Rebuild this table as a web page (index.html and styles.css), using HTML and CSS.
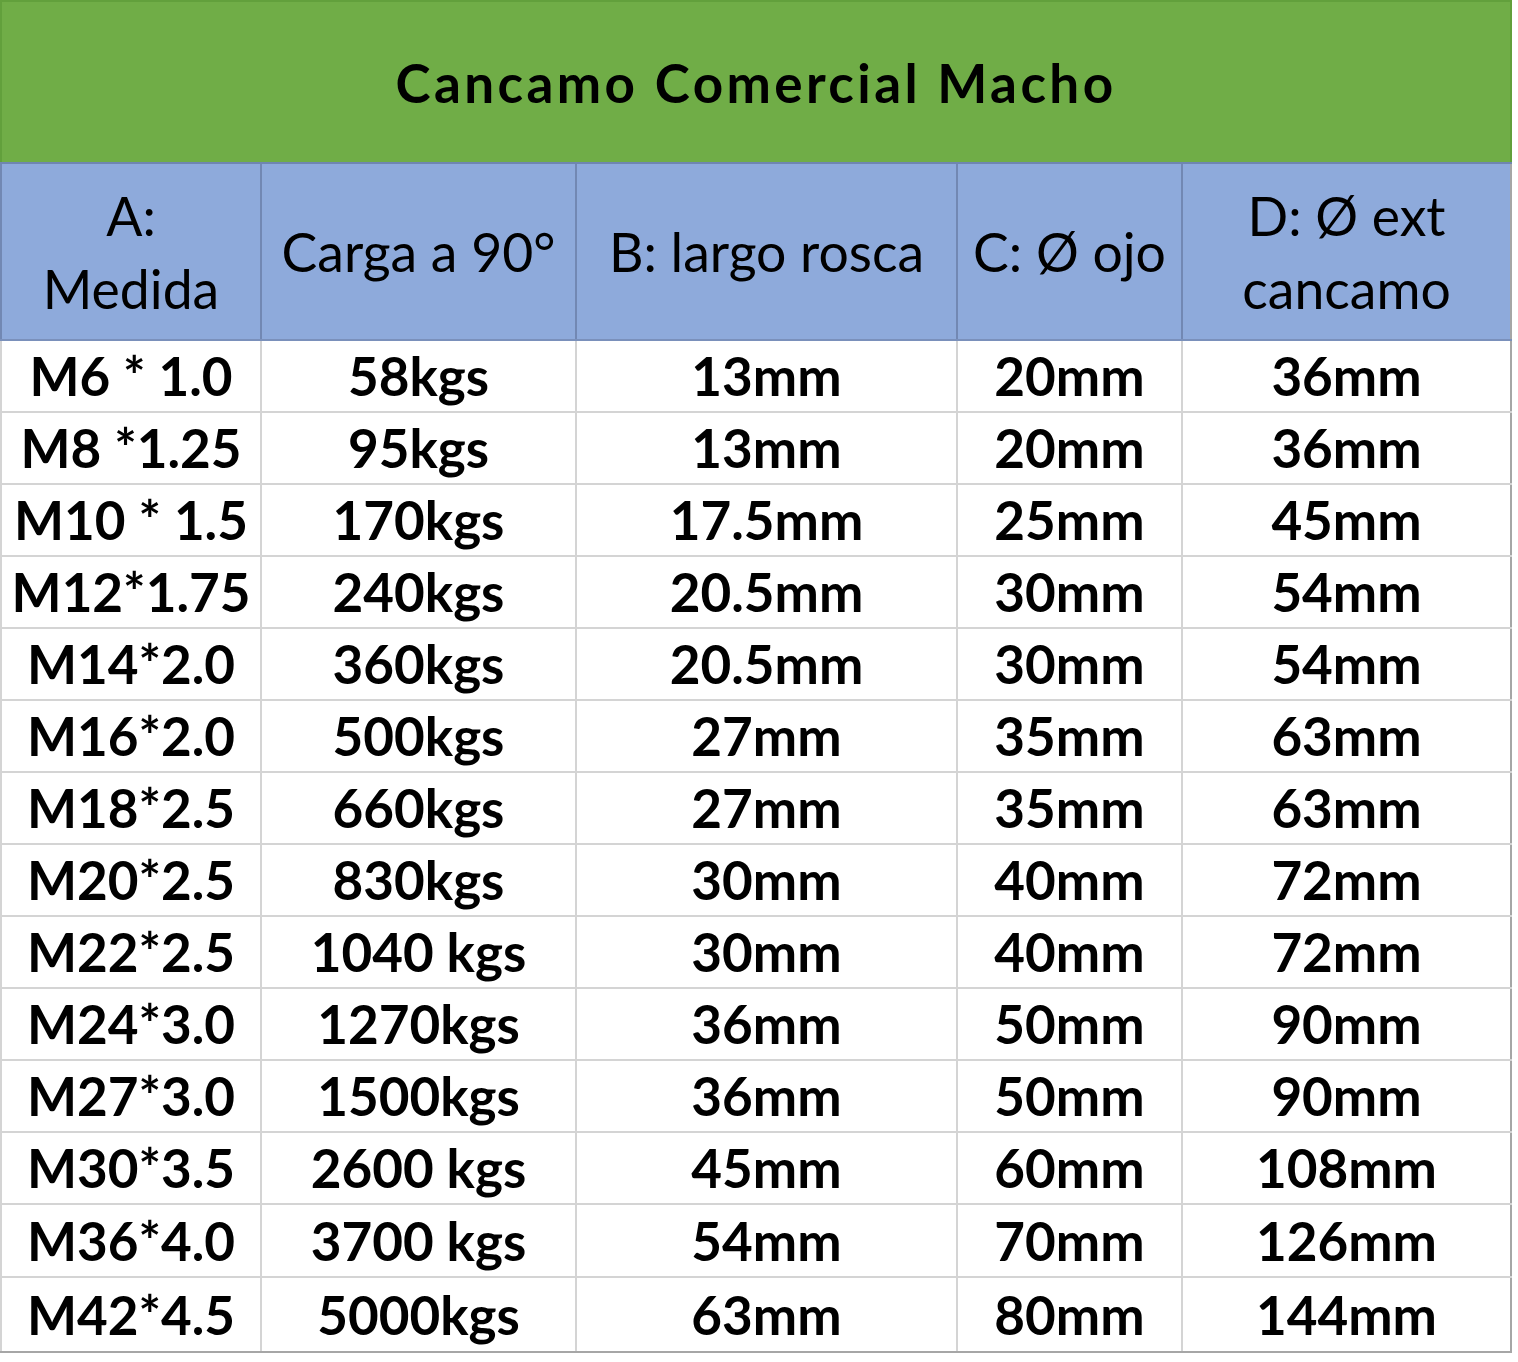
FILE: index.html
```html
<!DOCTYPE html>
<html lang="es">
<head>
<meta charset="utf-8">
<title>Cancamo Comercial Macho</title>
<link rel="stylesheet" href="styles.css">
</head>
<body>
<table class="spec">
  <colgroup>
    <col class="c1"><col class="c2"><col class="c3"><col class="c4"><col class="c5">
  </colgroup>
  <thead>
    <tr class="title-row"><th colspan="5">Cancamo Comercial Macho</th></tr>
    <tr class="head-row">
      <th>A:<br>Medida</th>
      <th>Carga a 90°</th>
      <th>B: largo rosca</th>
      <th>C: Ø ojo</th>
      <th>D: Ø ext<br>cancamo</th>
    </tr>
  </thead>
  <tbody>
    <tr><td>M6 * 1.0</td><td>58kgs</td><td>13mm</td><td>20mm</td><td>36mm</td></tr>
    <tr><td>M8 *1.25</td><td>95kgs</td><td>13mm</td><td>20mm</td><td>36mm</td></tr>
    <tr><td>M10 * 1.5</td><td>170kgs</td><td>17.5mm</td><td>25mm</td><td>45mm</td></tr>
    <tr><td>M12*1.75</td><td>240kgs</td><td>20.5mm</td><td>30mm</td><td>54mm</td></tr>
    <tr><td>M14*2.0</td><td>360kgs</td><td>20.5mm</td><td>30mm</td><td>54mm</td></tr>
    <tr><td>M16*2.0</td><td>500kgs</td><td>27mm</td><td>35mm</td><td>63mm</td></tr>
    <tr><td>M18*2.5</td><td>660kgs</td><td>27mm</td><td>35mm</td><td>63mm</td></tr>
    <tr><td>M20*2.5</td><td>830kgs</td><td>30mm</td><td>40mm</td><td>72mm</td></tr>
    <tr><td>M22*2.5</td><td>1040 kgs</td><td>30mm</td><td>40mm</td><td>72mm</td></tr>
    <tr><td>M24*3.0</td><td>1270kgs</td><td>36mm</td><td>50mm</td><td>90mm</td></tr>
    <tr><td>M27*3.0</td><td>1500kgs</td><td>36mm</td><td>50mm</td><td>90mm</td></tr>
    <tr><td>M30*3.5</td><td>2600 kgs</td><td>45mm</td><td>60mm</td><td>108mm</td></tr>
    <tr class="tall"><td>M36*4.0</td><td>3700 kgs</td><td>54mm</td><td>70mm</td><td>126mm</td></tr>
    <tr class="taller"><td>M42*4.5</td><td>5000kgs</td><td>63mm</td><td>80mm</td><td>144mm</td></tr>
  </tbody>
</table>
</body>
</html>
```
FILE: styles.css
```css
html, body {
  margin: 0;
  padding: 0;
  background: #ffffff;
}

.spec {
  width: 1510px;
  table-layout: fixed;
  border-collapse: collapse;
  font-family: Lato, "Open Sans", sans-serif;
  color: #000000;
  text-align: center;
}

.c1 { width: 260px; }
.c2 { width: 315px; }
.c3 { width: 381px; }
.c4 { width: 225px; }
.c5 { width: 329px; }

.spec th,
.spec td {
  padding: 0;
  vertical-align: middle;
  text-align: center;
}

.title-row th {
  height: 160px;
  background: #70ad47;
  font-size: 53px;
  font-weight: 700;
  letter-spacing: 3.4px;
  border: 2px solid #62a03c;
  border-bottom: 2px solid #6f86b0;
}

.head-row th {
  height: 175px;
  background: #8eaadb;
  font-size: 53.5px;
  font-weight: 400;
  line-height: 73px;
  border-left: 2px solid #7288b3;
  border-right: 2px solid #7288b3;
  border-bottom: 2px solid #7a90bb;
}

.spec td {
  height: 70px;
  font-size: 53px;
  font-weight: 700;
  line-height: 60px;
  border: 2px solid #d4d4d4;
}

.spec tr.tall td {
  height: 71px;
}

.spec tr.taller td {
  height: 73px;
}

.spec tbody tr:last-child td {
  border-bottom: 2px solid #a6a6a6;
}

.spec tbody td:last-child,
.head-row th:last-child {
  border-right: 2px solid #a6a6a6;
}
```
